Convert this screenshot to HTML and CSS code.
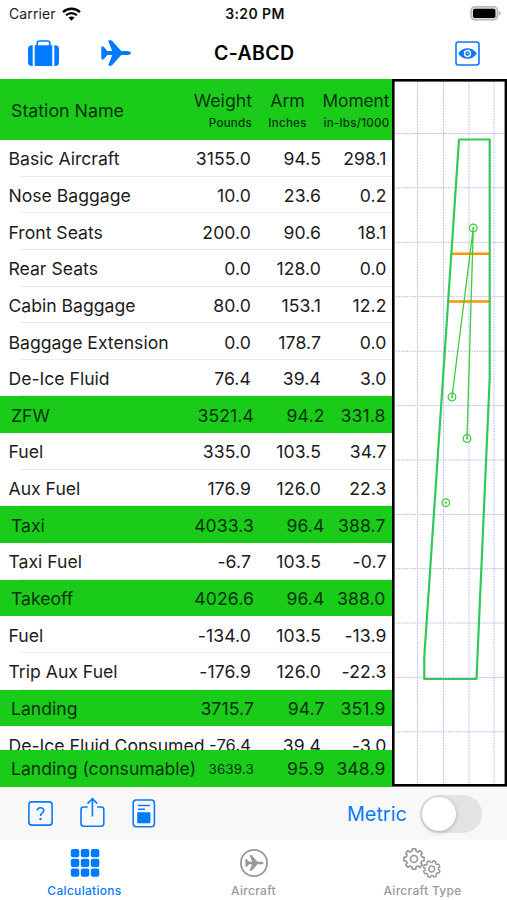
FILE: index.html
```html
<!DOCTYPE html>
<html lang="en">
<head>
<meta charset="utf-8">
<title>C-ABCD</title>
<link rel="stylesheet" href="styles.css">
</head>
<body>
<svg class="defs" width="0" height="0">
  <defs>
    <path id="plane" d="M30 13C30 11.6 27.8 10.9 25.3 10.9H20.2L11.5 1.2C10.9 .5 10.4 .2 9.6 .2H8.2C7.5 .2 7.2 .7 7.5 1.4L11.2 10.9H6.3L3.2 7.2C2.8 6.8 2.5 6.6 2 6.6H1.1C.6 6.6 .3 6.9 .3 7.4V18.6C.3 19.1 .6 19.4 1.1 19.4H2C2.5 19.4 2.8 19.2 3.2 18.8L6.3 15.1H11.2L7.5 24.6C7.2 25.3 7.5 25.8 8.2 25.8H9.6C10.4 25.8 10.9 25.5 11.5 24.8L20.2 15.1H25.3C27.8 15.1 30 14.4 30 13Z"/>
    <path id="tooth" d="M7.2 -3L7.9 -2L9.6 -1.9Q10.1 -1.8 10.1 -1.3V1.3Q10.1 1.8 9.6 1.9L7.9 2L7.2 3"/>
    <g id="gear">
      <use href="#tooth"/><use href="#tooth" transform="rotate(45)"/><use href="#tooth" transform="rotate(90)"/><use href="#tooth" transform="rotate(135)"/><use href="#tooth" transform="rotate(180)"/><use href="#tooth" transform="rotate(225)"/><use href="#tooth" transform="rotate(270)"/><use href="#tooth" transform="rotate(315)"/>
      <circle r="3.5"/>
    </g>
  </defs>
</svg>
<div class="app">
  <header class="status">
    <div class="carrier"><span>Carrier</span>
      <svg width="19" height="14" viewBox="0 0 19 14"><path d="M1 5.1C5.8 .6 13.2 .6 18 5.1" fill="none" stroke="#000" stroke-width="2.3"/><path d="M4 8.3C7.2 5.3 11.8 5.3 15 8.3" fill="none" stroke="#000" stroke-width="2.2"/><path d="M6.4 10.6C8.2 9 10.8 9 12.6 10.6L9.5 13.7Z"/></svg>
    </div>
    <div class="time">3:20 PM</div>
    <svg class="battery" width="31" height="15" viewBox="0 0 31 15"><rect x="1" y=".8" width="26.6" height="13" rx="3.8" fill="#ddd" stroke="#b8b8b8" stroke-width="1.5"/><rect x="3" y="2.7" width="22.4" height="9.3" rx="1.8"/><path d="M28.8 5Q30.8 5.6 30.8 7.3T28.8 9.7Z" fill="#b8b8b8"/></svg>
  </header>
  <nav class="navbar">
    <svg class="case" width="31" height="27" viewBox="0 0 31 27" fill="#007aff"><path d="M4.7 5.2V26H3.8Q0 26 0 22V9.2Q0 5.2 3.8 5.2ZM26.3 5.2V26H27.2Q31 26 31 22V9.2Q31 5.2 27.2 5.2ZM6.7 5.2H24.3V26H6.7Z"/><path d="M9.2 6V3.3Q9.2 1 11.5 1H19.5Q21.8 1 21.8 3.3V6" fill="none" stroke="#007aff" stroke-width="1.7"/></svg>
    <svg class="plane" width="30" height="27" viewBox="0 0 30 27" fill="#007aff"><use href="#plane"/></svg>
    <h1>C-ABCD</h1>
    <svg class="eye" width="25" height="25" viewBox="0 0 25 25"><rect x="1" y="1" width="23" height="23" rx="2.4" fill="none" stroke="#0a7aff" stroke-width="1.6"/><path d="M3.2 12.5C7.5 5.4 17.5 5.4 21.8 12.5C17.5 19.6 7.5 19.6 3.2 12.5Z" fill="#0a78f0"/><circle cx="12.5" cy="12.5" r="3.7" fill="#fff"/><circle cx="12.5" cy="12.5" r="2.2" fill="#0a78f0"/><circle cx="12.8" cy="12.3" r=".7" fill="#fff"/></svg>
  </nav>
  <main class="content">
    <section class="table">
      <div class="head">
        <div class="station">Station Name</div>
        <div class="hcol hw"><b>Weight</b><small>Pounds</small></div>
        <div class="hcol ha"><b>Arm</b><small>Inches</small></div>
        <div class="hcol hm"><b>Moment</b><small>in-lbs/1000</small></div>
      </div>
      <div class="rows">
        <div class="row"><span>Basic Aircraft</span><i>3155.0</i><i>94.5</i><i>298.1</i></div>
        <div class="row"><span>Nose Baggage</span><i>10.0</i><i>23.6</i><i>0.2</i></div>
        <div class="row"><span>Front Seats</span><i>200.0</i><i>90.6</i><i>18.1</i></div>
        <div class="row"><span>Rear Seats</span><i>0.0</i><i>128.0</i><i>0.0</i></div>
        <div class="row"><span>Cabin Baggage</span><i>80.0</i><i>153.1</i><i>12.2</i></div>
        <div class="row"><span>Baggage Extension</span><i>0.0</i><i>178.7</i><i>0.0</i></div>
        <div class="row"><span>De-Ice Fluid</span><i>76.4</i><i>39.4</i><i>3.0</i></div>
        <div class="row total"><span>ZFW</span><i>3521.4</i><i>94.2</i><i>331.8</i></div>
        <div class="row"><span>Fuel</span><i>335.0</i><i>103.5</i><i>34.7</i></div>
        <div class="row"><span>Aux Fuel</span><i>176.9</i><i>126.0</i><i>22.3</i></div>
        <div class="row total"><span>Taxi</span><i>4033.3</i><i>96.4</i><i>388.7</i></div>
        <div class="row"><span>Taxi Fuel</span><i>-6.7</i><i>103.5</i><i>-0.7</i></div>
        <div class="row total"><span>Takeoff</span><i>4026.6</i><i>96.4</i><i>388.0</i></div>
        <div class="row"><span>Fuel</span><i>-134.0</i><i>103.5</i><i>-13.9</i></div>
        <div class="row"><span>Trip Aux Fuel</span><i>-176.9</i><i>126.0</i><i>-22.3</i></div>
        <div class="row total"><span>Landing</span><i>3715.7</i><i>94.7</i><i>351.9</i></div>
        <div class="row"><span>De-Ice Fluid Consumed</span><i class="mid">-76.4</i><i>39.4</i><i>-3.0</i></div>
      </div>
      <div class="row total foot"><span>Landing (consumable)</span><i class="tiny">3639.3</i><i>95.9</i><i>348.9</i></div>
    </section>
    <svg class="chart" width="115" height="708" viewBox="392 79 115 708">
      <rect x="393.3" y="80.3" width="112.6" height="705" fill="#fff" stroke="#000" stroke-width="2.6"/>
      <path d="M417.5 82V784M443.5 82V784M469 82V784M494 82V784M396 133.5H504M396 187.8H504M396 242.3H504M396 296.7H504M396 351.2H504M396 405.6H504M396 460H504M396 514.5H504M396 568.7H504M396 623H504M396 677.4H504M396 731.8H504" fill="none" stroke="#bcb5f5" stroke-width="1" stroke-dasharray="1.6 1"/>
      <path d="M451 253.7H489.5M448 301.5H489.5" stroke="#ff9500" stroke-width="2.4"/>
      <path d="M459 139.5H489.7V378L476.5 679H424.3V657Z" fill="none" stroke="#34c759" stroke-width="2.2" stroke-linejoin="round"/>
      <g fill="none" stroke="#3bcf38" stroke-width="1.3"><path d="M452 397L473.3 228L467 438.5"/><circle cx="473.3" cy="228" r="3.8"/><circle cx="452" cy="397" r="3.8"/><circle cx="467" cy="438.5" r="3.8"/><circle cx="445.8" cy="502.7" r="3.8"/></g>
      <g fill="#3bcf38"><circle cx="473.3" cy="228" r="1.1"/><circle cx="452" cy="397" r="1.1"/><circle cx="467" cy="438.5" r="1.1"/><circle cx="445.8" cy="502.7" r="1.1"/></g>
    </svg>
  </main>
  <div class="toolbar">
    <svg class="help" width="25" height="25" viewBox="0 0 25 25" fill="none" stroke="#0a7aff" stroke-width="1.6"><rect x=".9" y=".9" width="23.2" height="23.2" rx="2.8"/><path d="M9.2 9.6C9.2 5.8 15.8 5.8 15.8 9.4C15.8 11.9 12.5 11.8 12.5 15"/><circle cx="12.5" cy="18" r="1.2" fill="#0a7aff" stroke="none"/></svg>
    <svg class="share" width="25" height="31" viewBox="0 0 25 31" fill="none" stroke="#0a7aff" stroke-width="1.6"><path d="M7.8 10H3.6Q1 10 1 12.6V26.6Q1 29.2 3.6 29.2H21.2Q23.8 29.2 23.8 26.6V12.6Q23.8 10 21.2 10H17M12.4 19.5V2M7.5 6.6L12.4 1.7L17.3 6.6"/></svg>
    <svg class="doc" width="24" height="29" viewBox="0 0 24 29" fill="none" stroke="#0a7aff" stroke-width="1.6"><rect x="1.2" y="1" width="21.2" height="26.8" rx="3"/><path d="M5.8 6.5H17.8M5.8 10.2H13"/><rect x="5.2" y="13.3" width="13.2" height="11" rx="1" fill="#007aff" stroke="none"/></svg>
    <span class="metric">Metric</span>
    <div class="switch"><div class="knob"></div></div>
  </div>
  <footer class="tabs">
    <div class="tab active">
      <svg width="30" height="28" viewBox="0 0 30 28" fill="#007aff"><rect x=".8" width="8.5" height="8.2" rx="2"/><rect x="10.8" width="8.5" height="8.2" rx="2"/><rect x="20.8" width="8.5" height="8.2" rx="2"/><rect x=".8" y="9.8" width="8.5" height="8.2" rx="2"/><rect x="10.8" y="9.8" width="8.5" height="8.2" rx="2"/><rect x="20.8" y="9.8" width="8.5" height="8.2" rx="2"/><rect x=".8" y="19.6" width="8.5" height="8.2" rx="2"/><rect x="10.8" y="19.6" width="8.5" height="8.2" rx="2"/><rect x="20.8" y="19.6" width="8.5" height="8.2" rx="2"/></svg>
      <span>Calculations</span>
    </div>
    <div class="tab">
      <svg width="30" height="28" viewBox="0 0 30 28"><circle cx="15" cy="14" r="13.1" fill="none" stroke="#999" stroke-width="1.8"/><use href="#plane" fill="#999" transform="translate(6.2 6) scale(.61 .61)"/></svg>
      <span>Aircraft</span>
    </div>
    <div class="tab">
      <svg width="40" height="32" viewBox="0 0 40 32" fill="none" stroke="#999" stroke-width="1.7"><use href="#gear" transform="translate(11 12)"/><use href="#gear" transform="translate(28.7 22) rotate(20) scale(.83)"/></svg>
      <span>Aircraft Type</span>
    </div>
  </footer>
</div>
</body>
</html>
```

FILE: styles.css
```css
* { box-sizing: border-box; }
body { margin: 0; background: #fff; color: #1c1c1c; font-family: Inter, "Liberation Sans", sans-serif; }
svg { display: block; flex: none; }
.defs { position: absolute; }
.app { width: 507px; height: 900px; display: flex; flex-direction: column; overflow: hidden; white-space: nowrap; }

.status { height: 27px; display: grid; grid-template-columns: 1fr auto 1fr; align-items: center; padding: 0 6px 0 9px; }
.carrier { display: flex; align-items: center; gap: 6px; font-size: 14px; letter-spacing: 0.1px; }
.time { font-size: 14px; font-weight: 600; letter-spacing: 0.4px; color: #111; }
.battery { justify-self: end; }

.navbar { height: 52px; display: flex; align-items: center; padding-left: 28px; color: #000; }
.plane { margin-left: 42px; }
.navbar h1 { margin: 0 0 0 83px; width: 81px; font-size: 19.5px; font-weight: 600; letter-spacing: 0.35px; }
.eye { margin-left: 160px; }

.content { height: 708px; display: flex; }
.table { width: 392px; display: flex; flex-direction: column; overflow: hidden; }
.head { height: 61px; flex: none; display: flex; align-items: center; background: #1acb1a; color: #06330b; padding-left: 11px; }
.station { width: 170px; font-size: 17.8px; padding-top: 1px; }
.hcol { display: flex; flex-direction: column; gap: 2px; padding-top: 3px; }
.hcol b { font-size: 17.7px; line-height: 22px; font-weight: 400; }
.hcol small { font-size: 11.5px; line-height: 18px; font-weight: 500; letter-spacing: 0.3px; }
.hw { width: 71px; align-items: flex-end; }
.ha { width: 71px; align-items: center; }
.hm { width: 66.5px; align-items: flex-end; }
.hm b { font-size: 17.3px; }

.rows { height: 610px; overflow: hidden; }
.row { height: 36.65px; flex: none; display: grid; grid-template-columns: 182.5px 60px 70px 65.5px; align-items: center; padding: 1px 0 0 8.5px; font-size: 17.6px; background: linear-gradient(#ececec, #ececec) 20px 100% / 100% 1px no-repeat; }
.row i { font-style: normal; text-align: right; letter-spacing: 0.1px; }
.row.total { background: #1acb1a; color: #06330b; padding-left: 11px; grid-template-columns: 183px 60px 70.5px 61px; }
.row .mid { font-size: 16.5px; }
.row .tiny { font-size: 13.5px; }

.toolbar { height: 53px; background: #f8f8f8; display: flex; align-items: center; padding-left: 28px; }
.share { margin: -2px 0 0 27px; }
.doc { margin-left: 27px; }
.metric { width: 60px; margin-left: 191px; font-size: 19.8px; color: #0a7aff; }
.switch { width: 62px; height: 38px; margin-left: 13px; border-radius: 19px; background: #e3e3e4; padding: 2px; }
.knob { width: 34px; height: 34px; border-radius: 50%; background: #fff; box-shadow: 0 1px 4px rgba(0, 0, 0, 0.25); }

.tabs { height: 60px; display: grid; grid-template-columns: repeat(3, 1fr); }
.tab { display: flex; flex-direction: column; align-items: center; padding-top: 9px; color: #999; font-size: 12px; font-weight: 500; letter-spacing: 0.3px; }
.tab svg { margin-bottom: 6px; }
.tab:last-child svg { margin: -2px 0 4px; }
.active { color: #0a7aff; }
```
